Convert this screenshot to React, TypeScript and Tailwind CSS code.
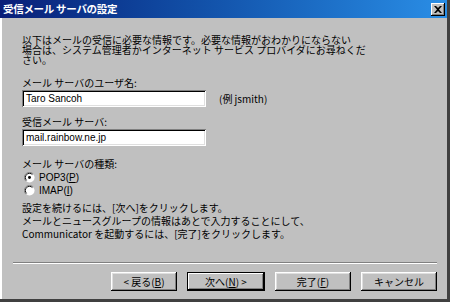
import React from 'react';

const jp = { fontFamily: '"Noto Sans CJK JP", "Noto Sans", sans-serif' };
const latin = { fontFamily: '"Liberation Sans", Arial, sans-serif' };

const RadioDot: React.FC<{ checked?: boolean }> = ({ checked }) => (
  <svg width="11" height="11" viewBox="0 0 12 12" className="shrink-0">
    <circle cx="6" cy="6" r="5.5" fill="#fff" />
    <path d="M10 2 A5.5 5.5 0 0 0 2 10" stroke="#808080" strokeWidth="1" fill="none" />
    <path d="M9.2 2.8 A4.5 4.5 0 0 0 2.8 9.2" stroke="#000" strokeWidth="1" fill="none" />
    {checked && <circle cx="6" cy="6" r="1.6" fill="#000" />}
  </svg>
);

const WinButton: React.FC<{ children: React.ReactNode; w: string; def?: boolean }> = ({ children, w, def }) => (
  <div
    className={`${w} h-[19px] flex items-center justify-center text-[10px] leading-none text-black bg-[#c0c0c0] ${
      def
        ? 'border border-black shadow-[inset_-1px_-1px_0_#000,inset_1px_1px_0_#fff,inset_-2px_-2px_0_#808080]'
        : 'shadow-[inset_-1px_-1px_0_#000,inset_1px_1px_0_#fff,inset_-2px_-2px_0_#808080,inset_2px_2px_0_#dfdfdf]'
    }`}
  >
    {children}
  </div>
);

const TextField: React.FC<{ value: string }> = ({ value }) => (
  <div
    className="w-[184px] h-[17px] bg-white flex items-center pl-[4px] text-[10px] leading-none text-black shadow-[inset_1px_1px_0_#808080,inset_-1px_-1px_0_#fff,inset_2px_2px_0_#000,inset_-2px_-2px_0_#dfdfdf]"
    style={latin}
  >
    {value}
  </div>
);

const App: React.FC = () => {
  return (
    <div className="w-[450px] h-[302px] bg-[#c0c0c0] flex flex-col border-r-[3px] border-b-[3px] border-[#404040] overflow-hidden" style={jp}>
      {/* Title bar */}
      <div className="h-[18px] flex items-center justify-between bg-gradient-to-r from-[#0a1e78] to-[#2a8ee6] pl-[3px] pr-[2px]">
        <span className="text-white text-[10.5px] font-bold leading-none tracking-[-0.3px]">受信メール サーバの設定</span>
        <div className="w-[14px] h-[13px] bg-[#c0c0c0] flex items-center justify-center shadow-[inset_-1px_-1px_0_#000,inset_1px_1px_0_#fff,inset_-2px_-2px_0_#808080]">
          <svg width="8" height="7" viewBox="0 0 8 7">
            <path d="M0 0 L2 0 L4 2 L6 0 L8 0 L5 3.5 L8 7 L6 7 L4 5 L2 7 L0 7 L3 3.5 Z" fill="#000" />
          </svg>
        </div>
      </div>

      {/* Body */}
      <div className="flex-1 flex flex-col border-l-2 border-l-white pl-[11px] pr-[10px]">
        <div className="pl-[9px] flex flex-col text-black text-[10px]">
          <p className="mt-[17px] leading-[10px]">
            以下はメールの受信に必要な情報です。必要な情報がおわかりにならない
            <br />
            場合は、システム管理者かインターネット サービス プロバイダにお尋ねくだ
            <br />
            さい。
          </p>

          <div className="mt-[12px] leading-[11px]">メール サーバのユーザ名:</div>
          <div className="mt-[2px] flex items-center gap-[13px]">
            <TextField value="Taro Sancoh" />
            <span className="leading-none">(例 jsmith)</span>
          </div>

          <div className="mt-[9px] leading-[11px]">受信メール サーバ:</div>
          <div className="mt-[2px]">
            <TextField value="mail.rainbow.ne.jp" />
          </div>

          <div className="mt-[12px] leading-[11px]">メール サーバの種類:</div>
          <div className="mt-[2px] h-[13px] flex items-center gap-[4px] pl-[2px]">
            <RadioDot checked />
            <span className="leading-none" style={latin}>
              POP3(<span className="underline">P</span>)
            </span>
          </div>
          <div className="h-[13px] flex items-center gap-[4px] pl-[2px]">
            <RadioDot />
            <span className="leading-none" style={latin}>
              IMAP(<span className="underline">I</span>)
            </span>
          </div>

          <p className="mt-[4px] leading-[13px]">
            設定を続けるには、[次へ]をクリックします。
            <br />
            メールとニュースグループの情報はあとで入力することにして、
            <br />
            Communicator を起動するには、[完了]をクリックします。
          </p>
        </div>

        {/* Separator */}
        <div className="mt-[22px] h-[2px] border-t border-t-[#808080] border-b border-b-white" />

        {/* Buttons */}
        <div className="mt-[8px] flex justify-end gap-[10px]">
          <WinButton w="w-[66px]">
            &lt; 戻る(<span className="underline">B</span>)
          </WinButton>
          <WinButton w="w-[78px]" def>
            次へ(<span className="underline">N</span>) &gt;
          </WinButton>
          <WinButton w="w-[76px]">
            完了(<span className="underline">F</span>)
          </WinButton>
          <WinButton w="w-[76px]">キャンセル</WinButton>
        </div>
      </div>
    </div>
  );
};

export default App;
